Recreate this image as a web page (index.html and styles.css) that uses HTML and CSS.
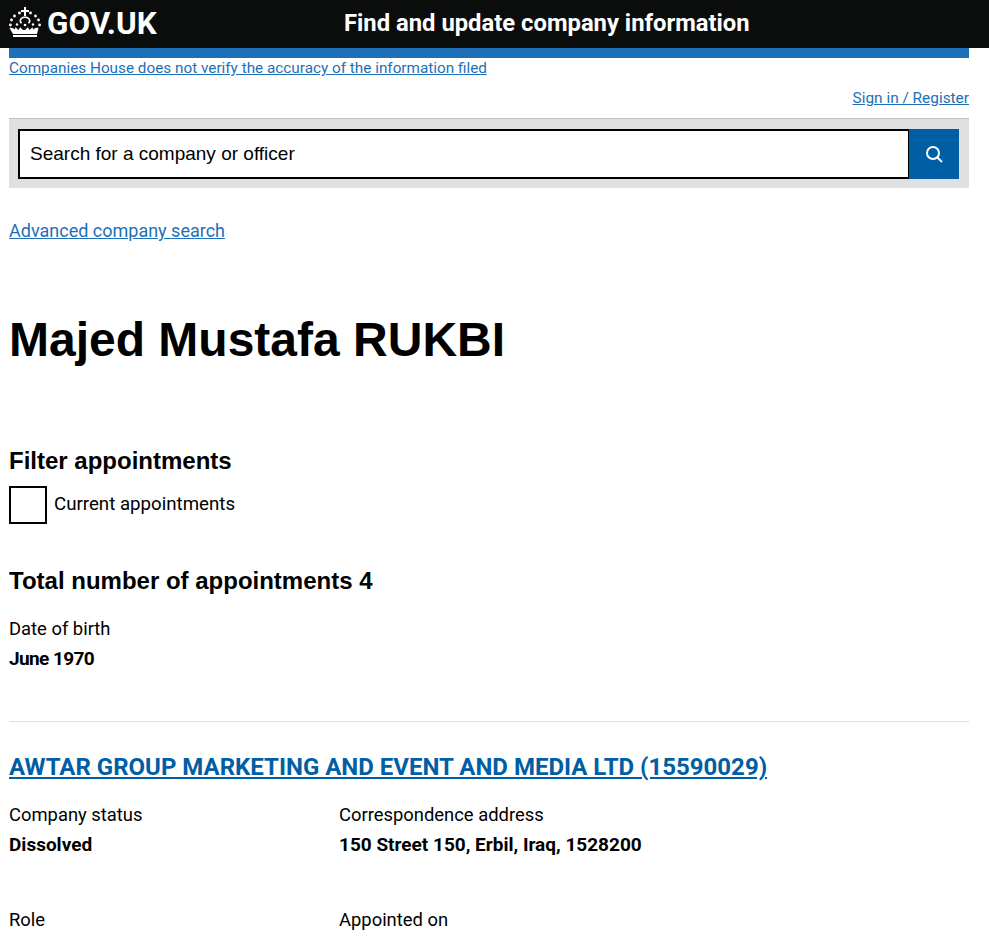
FILE: index.html
```html
<!DOCTYPE html>
<html lang="en">
<head>
  <meta charset="UTF-8" />
  <title>Majed Mustafa RUKBI - Find and update company information - GOV.UK</title>
  <link rel="stylesheet" href="styles.css">
</head>
<body>
  <header class="site-header">
    <a class="logo" href="#">
      <svg class="crown" viewBox="0 0 32 30" width="32" height="30" fill="#fff" aria-hidden="true">
        <path d="M15 0h2v3h3v2h-3v4h-2V5h-3V3h3z"/>
        <circle cx="10.500" cy="6" r="1.400"/><circle cx="21.500" cy="6" r="1.400"/>
        <circle cx="5.500" cy="9" r="1.400"/><circle cx="26.500" cy="9" r="1.400"/>
        <circle cx="2.500" cy="13" r="1.400"/><circle cx="29.500" cy="13" r="1.400"/>
        <circle cx="1.400" cy="18" r="1.400"/><circle cx="30.600" cy="18" r="1.400"/>
        <circle cx="8" cy="17.500" r="1.200"/><circle cx="24" cy="17.500" r="1.200"/>
        <circle cx="16" cy="18" r="1.300"/>
        <path d="M16 9.500c3.300 0 5.500 2 5.500 4.300 0 1.300-.6 2.300-1.500 3l-1.100-1c.6-.5 1-1.200 1-2 0-1.500-1.700-2.700-3.900-2.700s-3.900 1.200-3.900 2.700c0 .8.400 1.500 1 2l-1.100 1c-.9-.7-1.500-1.700-1.500-3 0-2.300 2.200-4.300 5.500-4.300z"/>
        <path d="M.5 21c2.500-.6 4 .2 5.200 1.500l.8-2.200 3 2.700 1.600-2.700 3 2.700h1.800l3-2.700 1.600 2.700 3-2.700.8 2.200c1.200-1.300 2.700-2.100 5.200-1.500L28 27H4z"/>
        <rect x="4" y="28" width="24" height="2"/>
      </svg>
      <span class="logo-text">GOV.UK</span>
    </a>
    <a class="service-name" href="#">Find and update company information</a>
  </header>

  <div class="page">
    <div class="phase-bar"></div>
    <p class="notice"><a href="#">Companies House does not verify the accuracy of the information filed</a></p>
    <p class="sign-in"><a href="#">Sign in / Register</a></p>

    <form class="search-bar">
      <input class="search-input" type="text" placeholder="Search for a company or officer" />
      <button class="search-btn" type="button" aria-label="Search">
        <svg viewBox="0 0 20 20" width="20" height="20" fill="none" stroke="#fff" stroke-width="2">
          <circle cx="9" cy="9" r="6"/>
          <path d="M13.500 13.500L18 18"/>
        </svg>
      </button>
    </form>

    <p class="advanced"><a href="#">Advanced company search</a></p>

    <h1 class="officer-name">Majed Mustafa RUKBI</h1>

    <h2 class="filter-title">Filter appointments</h2>
    <label class="check-row">
      <input class="check-box" type="checkbox" />
      <span class="check-label">Current appointments</span>
    </label>

    <h2 class="total-title">Total number of appointments 4</h2>

    <p class="label">Date of birth</p>
    <p class="value dob">June 1970</p>

    <hr class="divider" />

    <h2 class="company-title"><a href="#">AWTAR GROUP MARKETING AND EVENT AND MEDIA LTD (15590029)</a></h2>

    <div class="details">
      <div>
        <p class="label">Company status</p>
        <p class="value">Dissolved</p>
      </div>
      <div>
        <p class="label">Correspondence address</p>
        <p class="value">150 Street 150, Erbil, Iraq, 1528200</p>
      </div>
    </div>

    <div class="details">
      <div>
        <p class="label">Role</p>
        <p class="value">Director</p>
      </div>
      <div>
        <p class="label">Appointed on</p>
        <p class="value">15 March 2024</p>
      </div>
    </div>
  </div>
</body>
</html>
```

FILE: styles.css
```css
html, body {
  margin: 0;
  padding: 0;
}
body {
  font-family: Roboto, "Liberation Sans", sans-serif;
  font-size: 18px;
  color: #000;
  background: #fff;
  height: 943px;
  overflow: hidden;
}
a {
  color: #1d70b8;
}

.site-header {
  display: flex;
  align-items: center;
  height: 48px;
  background: #0b0c0c;
  padding-left: 9px;
  padding-bottom: 2px;
  box-sizing: border-box;
}
.logo {
  display: flex;
  align-items: center;
  gap: 6px;
  width: 335px;
  color: #fff;
  text-decoration: none;
}
.crown {
  margin-bottom: 2px;
}
.logo-text {
  font-size: 31.400px;
  font-weight: 700;
}
.service-name {
  color: #fff;
  font-size: 23.800px;
  font-weight: 700;
  text-decoration: none;
}

.page {
  margin: 0 20px 0 9px;
}
.phase-bar {
  height: 10px;
  background: #1d70b8;
}
.notice {
  margin: 0;
  font-size: 15.300px;
  line-height: 20px;
}
.sign-in {
  margin: 10px 0 0;
  font-size: 15.400px;
  line-height: 20px;
  text-align: right;
}

.search-bar {
  display: flex;
  margin: 10px 0 0;
  padding: 10px 10px 9px 9px;
  border-top: 1px solid #bfc1c3;
  background: #dee0e2;
}
.search-input {
  flex: 1;
  height: 50px;
  box-sizing: border-box;
  border: 2px solid #000;
  border-right-width: 1px;
  padding: 0 10px;
  font-family: "Liberation Sans", sans-serif;
  font-size: 19px;
}
.search-input::placeholder {
  color: #000;
  opacity: 1;
}
.search-btn {
  display: flex;
  align-items: center;
  justify-content: center;
  width: 50px;
  height: 50px;
  padding: 0;
  border: none;
  background: #005ea5;
}

.advanced {
  margin: 30px 0 0;
  line-height: 26px;
}

.officer-name {
  margin: 68px 0 0;
  font-family: "Liberation Sans", sans-serif;
  font-size: 48px;
  line-height: 56px;
  font-weight: 700;
}

.filter-title {
  margin: 79px 0 0;
  font-family: "Liberation Sans", sans-serif;
  font-size: 24px;
  line-height: 28px;
}
.check-row {
  display: flex;
  align-items: center;
  gap: 7px;
  margin-top: 11px;
}
.check-box {
  appearance: none;
  width: 38px;
  height: 38px;
  margin: 0;
  border: 2px solid #000;
  background: #fff;
}
.check-label {
  font-size: 18.700px;
  padding-bottom: 2px;
}

.total-title {
  margin: 43px 0 0;
  font-family: "Liberation Sans", sans-serif;
  font-size: 24px;
  line-height: 28px;
}

.label {
  margin: 0;
  font-size: 18.400px;
  line-height: 30px;
}
.value {
  margin: 0;
  font-size: 19px;
  line-height: 30px;
  font-weight: 700;
}
.dob {
  letter-spacing: -0.6px;
}
.total-title + .label {
  margin-top: 19px;
}

.divider {
  height: 1px;
  margin: 47px 0 0;
  border: none;
  background: #dee0e2;
}

.company-title {
  margin: 28px 0 0;
  font-size: 24px;
  line-height: 34px;
  font-weight: 700;
}
.company-title a {
  color: #005ea5;
}

.details {
  display: grid;
  grid-template-columns: 330px 1fr;
  margin-top: 16px;
}
.details + .details {
  margin-top: 45px;
}
.details + .details .value {
  padding-top: 1px;
}
```
